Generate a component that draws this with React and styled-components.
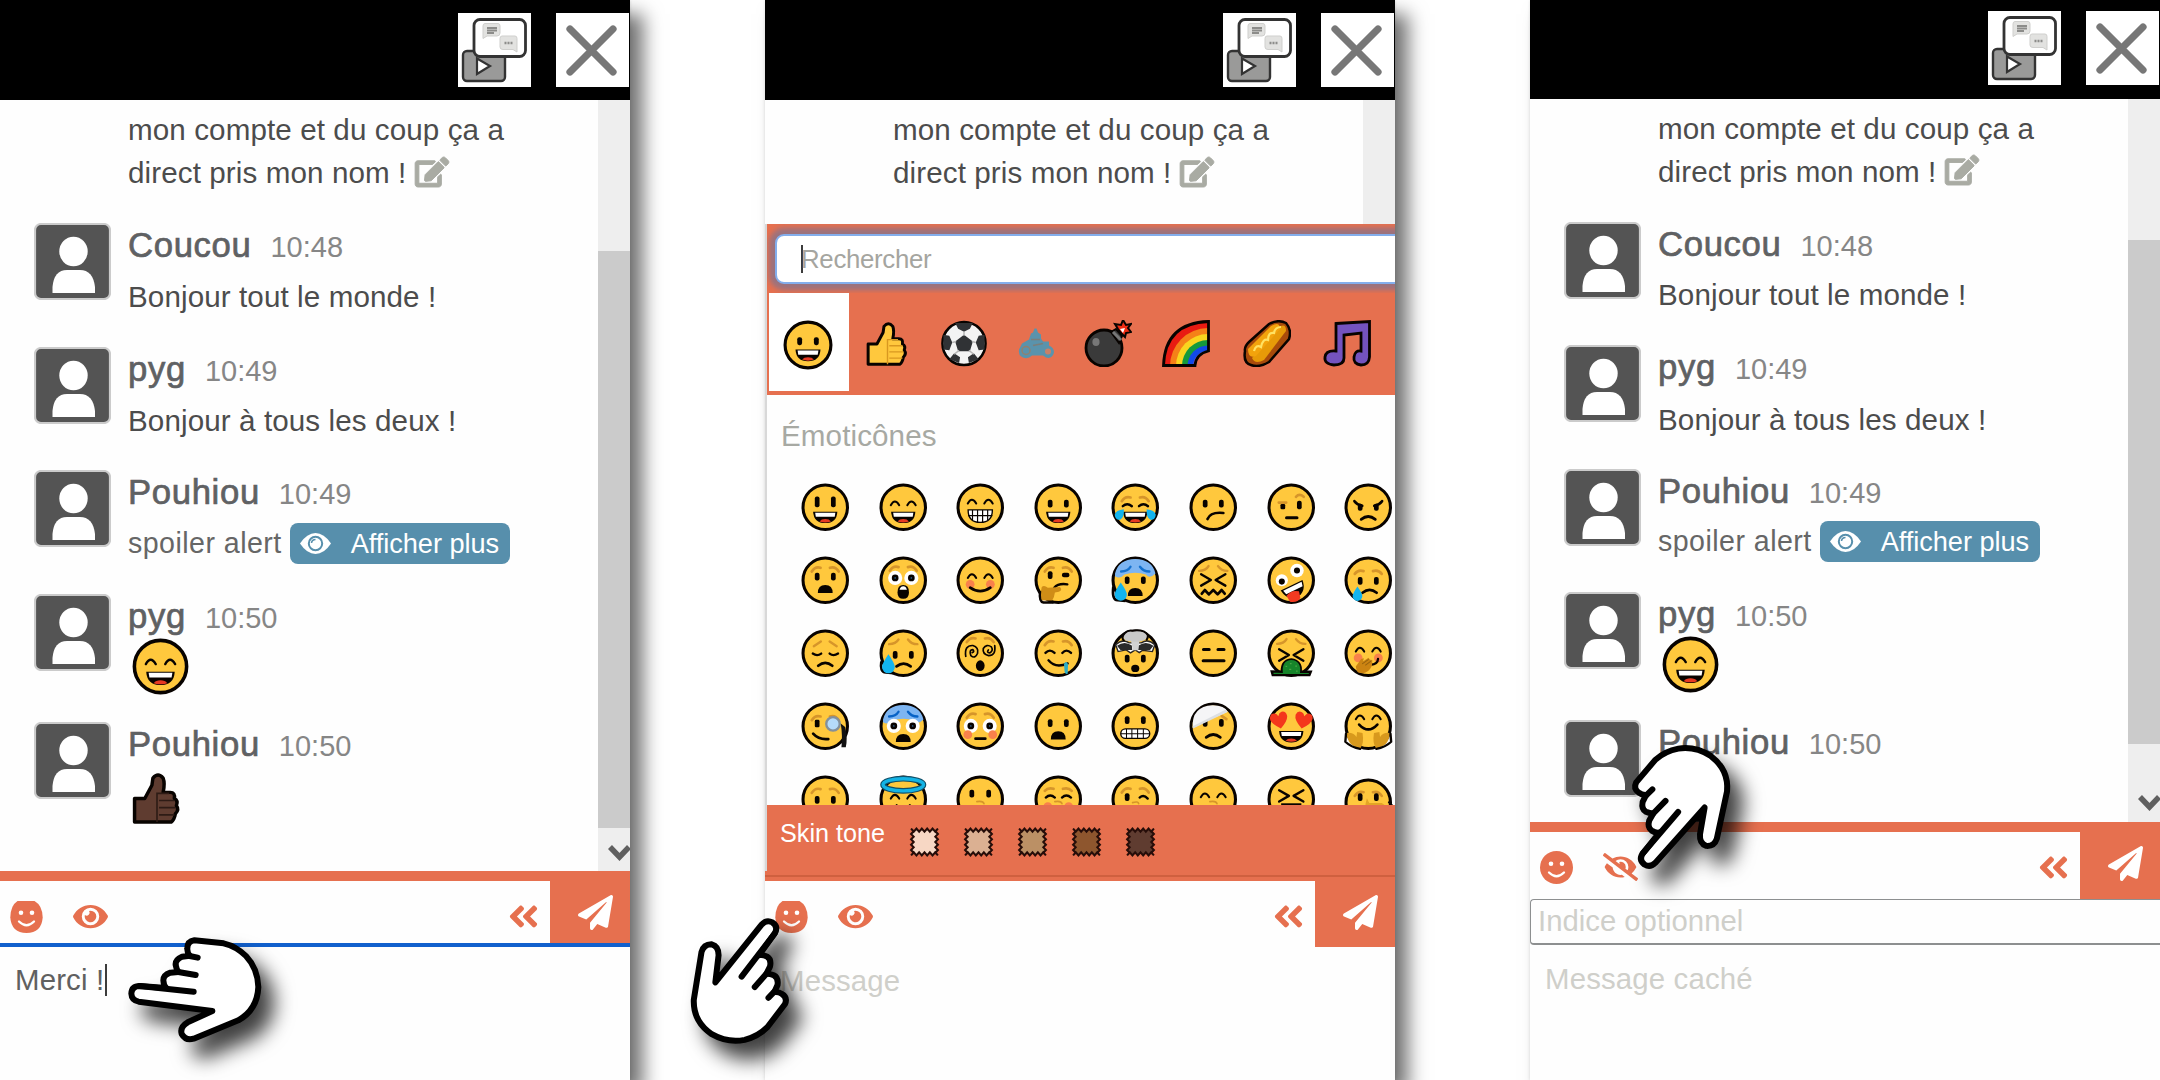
import React from "react";
import styled, { createGlobalStyle, css } from "styled-components";
import { FaEdit, FaEye, FaEyeSlash, FaAngleDoubleLeft, FaPaperPlane } from "react-icons/fa";

const ORANGE = "#e6704f";
const BLACK = "#080300";
const YELLOW = "#ffc83d";
const BROW = "#d6952a";

const GlobalStyle = createGlobalStyle`
  * { box-sizing: border-box; }
  body { margin: 0; background: #fff; font-family: "Liberation Sans", Arial, sans-serif; overflow: hidden; }
  svg { display: block; flex: none; }
`;

const Page = styled.main`
  position: relative;
  display: flex;
  gap: 135px;
  width: 2160px;
  height: 1080px;
  overflow: hidden;
  background: #fff;
`;

const Panel = styled.section`
  display: flex;
  flex-direction: column;
  flex: none;
  width: 630px;
  height: 1080px;
  background: #fefefe;
  box-shadow: 13px 14px 18px rgba(0, 0, 0, 0.56), 0 0 3px rgba(0, 0, 0, 0.12);
`;

const Header = styled.header`
  display: flex;
  justify-content: flex-end;
  gap: 25px;
  flex: none;
  height: ${(p) => p.$height}px;
  padding: ${(p) => (p.$height === 100 ? 13 : 11)}px 1px 0 0;
  background: #000;
`;

const HeaderButton = styled.div`
  width: 73px;
  height: 74px;
  background: #fff;
`;

const ChatArea = styled.div`
  display: flex;
  flex: none;
  height: ${(p) => p.$height}px;
  overflow: hidden;
`;

const MessageList = styled.div`
  flex: 1;
  padding-top: ${(p) => p.$top}px;
`;

const Text = styled.div`
  display: flex;
  align-items: center;
  font-size: 29.6px;
  letter-spacing: 0.1px;
  line-height: 43.2px;
  color: #4c4c4c;
  white-space: pre;
  ${(p) => p.$muted && css`font-size: 28.6px; letter-spacing: 0.45px; color: #666;`}
`;

const Continued = styled.div`
  height: 116px;
  padding-left: 128px;
`;

const EditIcon = styled(FaEdit)`
  width: 34px;
  height: 30px;
  margin: -2px 0 0 9px;
  color: #a9aba3;
  overflow: visible;
  stroke: currentColor;
  stroke-width: 16;
`;

const Message = styled.article`
  display: flex;
  gap: 17px;
  height: ${(p) => p.$height}px;
  padding-left: 34px;
`;

const NameLine = styled.div`
  display: flex;
  align-items: baseline;
  gap: 19px;
  height: 43px;
  line-height: 42px;
  margin-bottom: ${(p) => p.$gap}px;
`;

const Name = styled.span`
  font-size: 34.7px;
  letter-spacing: 0.65px;
  color: #5f6163;
  -webkit-text-stroke: 0.7px #5f6163;
`;

const Time = styled.span`
  font-size: 29px;
  color: #868686;
`;

const EmojiSlot = styled.div`
  padding-left: 4px;
`;

const MoreButton = styled.span`
  display: flex;
  align-items: center;
  gap: 20px;
  width: 220px;
  height: 41px;
  margin-left: 8px;
  padding-left: 10px;
  border-radius: 8px;
  background: #578fac;
  color: #fff;
  font-size: 27.2px;
  font-variant-ligatures: none;
  letter-spacing: -0.05px;
`;

const ScrollTrack = styled.div`
  display: flex;
  flex-direction: column;
  width: 32px;
  overflow: hidden;
  padding-top: ${(p) => p.$offset}px;
  background: #eee;
`;

const ScrollThumb = styled.div`
  flex: none;
  height: ${(p) => p.$height}px;
  background: #cbcbcb;
`;

const ScrollArrow = styled.svg`
  width: 26px;
  height: 22px;
  margin: ${(p) => p.$top}px 0 0 9px;
`;

const Composer = styled.div`
  display: flex;
  flex: none;
  height: ${(p) => p.$height}px;
  border-top: 10px solid ${ORANGE};
`;

const DividedComposer = styled(Composer)`
  border-top: 0;
  padding-top: 10px;
  background: linear-gradient(${ORANGE} 4px, #cf603f 4px, #cf603f 6px, ${ORANGE} 6px, ${ORANGE} 10px, #fefefe 10px);
`;

const Tools = styled.div`
  display: flex;
  flex: 1;
  align-items: center;
  height: 70px;
  padding: 0 11px 0 10px;
  color: ${ORANGE};
`;

const EyeIcon = styled(FaEye)`
  width: 35px;
  height: 31px;
  margin-left: 30px;
`;

const HiddenIcon = styled(FaEyeSlash)`
  width: 35px;
  height: 30px;
  margin-left: 30px;
`;

const CollapseIcon = styled(FaAngleDoubleLeft)`
  width: 31px;
  height: 35px;
  margin-left: auto;
`;

const Send = styled.div`
  display: flex;
  width: 80px;
  padding: 14px 0 0 28px;
  background: ${ORANGE};
  color: #fff;
  svg { width: 35px; height: 35px; }
`;

const Draft = styled.div`
  display: flex;
  align-items: center;
  gap: 1px;
  height: ${(p) => (p.$focused ? 69 : 67)}px;
  padding-left: 15px;
  border-top: ${(p) => (p.$focused ? "4px solid #1160cd" : "0")};
  font-size: 29.4px;
  letter-spacing: 0.15px;
  color: ${(p) => (p.$focused ? "#606060" : "#cfcfca")};
`;

const Caret = styled.i`
  width: 2px;
  height: ${(p) => p.$height}px;
  background: #3c3c3c;
`;

const HintField = styled.div`
  display: flex;
  align-items: center;
  flex: none;
  height: 46px;
  padding: 0 0 1px 7px;
  border: solid #8d8f90;
  border-width: 1px 0 2px 1px;
  border-radius: 4px 0 0 4px;
  font-size: 29.3px;
  color: #cfcfca;
`;

const Picker = styled.div`
  flex: none;
  display: flex;
  flex-direction: column;
  height: 647px;
  border-left: 2px solid #d8d8d8;
  overflow: hidden;
`;

const SearchBar = styled.div`
  height: 69px;
  padding: 10px 0 0 8px;
  overflow: hidden;
  background: ${ORANGE};
`;

const SearchField = styled.div`
  display: flex;
  align-items: center;
  width: 660px;
  height: 50px;
  padding-left: 24px;
  border: 2px solid #84aeec;
  border-radius: 9px;
  background: #fff;
  box-shadow: 0 0 5px 6px rgba(115, 115, 150, 0.66);
  font-size: 25.8px;
  letter-spacing: -0.3px;
  color: #a5a5a0;
`;

const SearchCaret = styled(Caret)`
  margin-right: -2px;
`;

const Tabs = styled.div`
  display: flex;
  height: 102px;
  padding: 0 0 4px 2px;
  background: ${ORANGE};
`;

const Tab = styled.div`
  display: flex;
  justify-content: center;
  align-items: center;
  flex: none;
  width: ${(p) => p.$width}px;
  padding-top: ${(p) => (p.$active ? 5 : 3)}px;
  padding-right: ${(p) => (p.$active ? 3 : 0)}px;
  background: ${(p) => (p.$active ? "#fff" : "transparent")};
`;

const EmojiBody = styled.div`
  height: 410px;
  padding: 18px 0 0 14px;
  overflow: hidden;
`;

const Category = styled.h2`
  margin: 0;
  height: 46px;
  line-height: 46px;
  font-size: 29.6px;
  letter-spacing: 0.1px;
  font-weight: 400;
  color: #a7a9a3;
`;

const EmojiGrid = styled.div`
  display: grid;
  grid-template-columns: repeat(8, 77.6px);
  grid-auto-rows: 72.9px;
  padding: 24px 0 0 20px;
`;

const SkinBar = styled.div`
  display: flex;
  align-items: center;
  flex: 1;
  padding: 7px 0 0 13px;
  gap: 21px;
  background: ${ORANGE};
`;

const SkinLabel = styled.span`
  width: 107px;
  margin: -17px 0 0;
  font-size: 25.2px;
  color: #fff;
  white-space: nowrap;
`;

const Pointer = styled.svg`
  position: absolute;
  left: ${(p) => p.$x - 90}px;
  top: ${(p) => p.$y - 90}px;
  width: 180px;
  height: 180px;
  overflow: visible;
  filter: drop-shadow(13px 16px 10px rgba(0, 0, 0, 0.75));
`;

/* ---------- emoji parts, drawn around a centre of 0,0 ---------- */

const Ink = ({ d, w = 7, c = BLACK }) => (
  <path d={d} fill="none" stroke={c} strokeWidth={w} strokeLinecap="round" strokeLinejoin="round" />
);
const Eyes = ({ y = -9, h = 23, dx = 24, w = 14 }) => (
  <g fill={BLACK}>
    <rect x={-dx - w / 2} y={y - h / 2} width={w} height={h} rx="6" />
    <rect x={dx - w / 2} y={y - h / 2} width={w} height={h} rx="6" />
  </g>
);
const HappyEyes = ({ y = -6 }) => <Ink w={6} d={`M-37,${y} q12,-22 25,0 M12,${y} q12,-22 25,0`} />;
const SquintEyes = ({ y = -2 }) => <Ink d={`M-37,${y} q13,-12 27,0 M11,${y} q13,-12 27,0`} />;
const Brows = ({ y = -34, c = BROW, tilt = 8 }) => (
  <Ink c={c} w={8} d={`M-40,${y + tilt} Q-30,${y - 8} -14,${y - 3} M14,${y - 3} Q30,${y - 8} 40,${y + tilt}`} />
);
const SwayBrows = ({ y = -36, c = BROW }) => (
  <Ink c={c} w={7} d={`M-42,${y + 10} Q-22,${y + 10} -14,${y - 4} M14,${y - 4} Q24,${y + 10} 42,${y + 10}`} />
);
const Laugh = ({ y = 13 }) => (
  <g transform={`translate(0 ${y})`}>
    <path d="M-36,0 H36 Q34,34 0,34 Q-34,34 -36,0Z" fill={BLACK} />
    <path d="M-30,3 H30 L28,15 H-28Z" fill="#fff" />
    <path d="M-17,29 Q-12,22 0,22 Q12,22 17,29 Q0,35 -17,29Z" fill="#e63a22" />
  </g>
);
const Frown = ({ y = 30, x = 0 }) => <Ink w={8} d={`M${x - 21},${y + 6} Q${x},${y - 11} ${x + 21},${y + 6}`} />;
const Smile = ({ y = 30 }) => <Ink w={8} d={`M-30,${y} Q0,${y + 21} 30,${y}`} />;
const Gape = ({ y = 14 }) => <path d={`M-22,${y + 24} Q-22,${y} 0,${y} Q22,${y} 22,${y + 24}Z`} fill={BLACK} />;
const Wide = ({ y = -4, dx = 28 }) => (
  <g>
    <circle cx={-dx} cy={y} r="21" fill="#fff" /><circle cx={dx} cy={y} r="21" fill="#fff" />
    <circle cx={-dx} cy={y} r="10" fill={BLACK} /><circle cx={dx} cy={y} r="10" fill={BLACK} />
    <circle cx={-dx} cy={y} r="2.5" fill="#26547c" /><circle cx={dx} cy={y} r="2.5" fill="#26547c" />
  </g>
);
const Blush = ({ y = 12, x = 30 }) => (
  <g fill="#f8814b"><circle cx={-x} cy={y} r="13" /><circle cx={x} cy={y} r="13" /></g>
);
const Tear = ({ x, y, s = 1 }) => (
  <path transform={`translate(${x} ${y}) scale(${s})`} d="M0,-26 Q18,0 18,10 A18,18 0 0 1 -18,10 Q-18,0 0,-26Z" fill="#12b4ef" />
);
const Cross = ({ y = -2 }) => <Ink w={7} d={`M-36,${y - 17} L-7,${y} L-36,${y + 17} M36,${y - 17} L7,${y} L36,${y + 17}`} />;
const BlueTop = () => <path d="M-60,-20 Q-50,-62 0,-63 Q50,-62 60,-20 Q42,-2 32,-17 Q0,-28 -32,-17 Q-46,-2 -60,-12Z" fill="#7db5f2" />;
const Heart = ({ x, r }) => (
  <path transform={`translate(${x} -18) rotate(${r})`} d="M0,25 Q-27,5 -26,-11 Q-22,-26 -9,-22 Q-2,-20 0,-12 Q4,-22 12,-23 Q25,-23 26,-9 Q26,6 0,25Z" fill="#f4371c" />
);

const FACES = {
  bigGrin: <><Eyes y={-16} h={32} /><Laugh /></>,
  laughing: <><HappyEyes /><Laugh /></>,
  beaming: <>
    <HappyEyes y={-11} />
    <path d="M-36,8 H36 Q36,45 0,45 Q-36,45 -36,8Z" fill="#fff" stroke={BLACK} strokeWidth="4" />
    <path d="M-36,25 H36 M-23,8 V39 M-8,8 V45 M7,8 V45 M22,8 V39" stroke={BLACK} strokeWidth="3.5" />
  </>,
  grin: <><Eyes y={-11} /><Laugh /></>,
  joy: <>
    <Brows y={-26} /><SquintEyes y={-3} /><Laugh />
    <path d="M-34,6 Q-32,31 -45,37 Q-59,39 -61,22 Q-58,9 -34,6Z M34,6 Q32,31 45,37 Q59,39 61,22 Q58,9 34,6Z" fill="#12b4ef" />
  </>,
  confused: <><Eyes y={-11} /><Ink w={8} d="M-17,35 Q-8,13 30,17" /></>,
  skeptic: <>
    <Ink c={BROW} w={8} d="M-37,-14 H-15 M14,-31 Q24,-42 37,-31" />
    <rect x="-32" y="-10" width="14" height="16" rx="4" fill={BLACK} /><rect x="17" y="-19" width="14" height="25" rx="6" fill={BLACK} />
    <Ink w={9} d="M-14,31 H17" />
  </>,
  angry: <><Ink w={8} d="M-41,-18 Q-34,-8 -18,-4 M41,-18 Q34,-8 18,-4" /><Eyes y={0} h={21} /><Frown y={30} /></>,
  anguished: <><Brows /><Eyes y={-11} /><Gape /></>,
  astonished: <>
    <Brows y={-36} /><Wide y={-7} dx={24} />
    <path d="M0,14 Q17,14 17,36 Q17,55 0,55 Q-17,55 -17,36 Q-17,14 0,14Z" fill={BLACK} />
    <path d="M-11,28 Q-8,18 0,18 Q8,18 11,28Z" fill="#fff" />
  </>,
  blushing: <><HappyEyes y={-7} /><Blush /><Smile y={22} /></>,
  thinking: <>
    <Brows y={-34} /><rect x="-31" y="-27" width="14" height="23" rx="6" fill={BLACK} />
    <rect x="11" y="-22" width="22" height="13" rx="6" fill={BLACK} /><Ink w={7} d="M-12,22 Q0,8 27,12" />
    <path d="M-49,20 Q-42,14 -31,22 L5,20 Q14,29 2,34 L-10,36 Q-12,52 -18,60 L-50,60 Q-56,52 -49,20Z" fill="#cf8d17" />
    <path d="M-54,32 Q-58,64 -44,66 L-14,66" stroke={BLACK} strokeWidth="7" fill="none" />
  </>,
  coldSweat: <><BlueTop /><SwayBrows y={-36} c="#1471cf" /><Eyes y={0} /><Gape y={23} />
    <path d="M-65,18 Q-70,60 -52,59 L-29,61" stroke={BLACK} strokeWidth="8" fill="none" /><Tear x={-43} y={33} /></>,
  confounded: <><SwayBrows y={-38} /><Cross y={-1} /><Ink w={8} d="M-34,40 L-25,29 L-13,42 L0,29 L13,42 L25,29 L34,40" /></>,
  zany: <>
    <circle cx="-28" cy="0" r="18" fill="#fff" /><circle cx="17" cy="-29" r="20" fill="#fff" />
    <circle cx="-28" cy="4" r="9" fill={BLACK} /><circle cx="17" cy="-29" r="9" fill={BLACK} />
    <g transform="rotate(-26 5 25)"><path d="M-30,14 H42 Q37,52 5,52 Q-25,52 -30,14Z" fill={BLACK} /><path d="M-24,18 H37 L34,31 H-20Z" fill="#fff" /></g>
    <path d="M-14,46 Q0,27 23,33 L27,52 Q20,68 -4,64Z" fill="#f33a21" />
  </>,
  crying: <><Brows y={-24} tilt={5} /><Eyes y={2} /><Frown y={31} x={4} /><Tear x={-32} y={39} s={0.8} /></>,
  pensive: <><Ink c={BROW} w={7} d="M-34,-21 L-13,-35 M13,-35 L34,-21" /><Ink w={7} d="M-37,1 Q-24,10 -12,1 M13,1 Q24,10 38,1" /><Frown y={31} /></>,
  relieved: <><SwayBrows y={-37} /><Eyes y={5} /><Frown y={33} x={1} /><path d="M-65,24 Q-70,56 -52,57 L-29,59" stroke={BLACK} strokeWidth="8" fill="none" /><Tear x={-44} y={30} s={1.05} /></>,
  dizzy: <><Brows y={-41} /><Ink w={5} d="M-43,9 Q-48,-24 -22,-23 Q-4,-18 -8,0 Q-15,18 -28,7 Q-34,-11 -22,-11 Q-16,-4 -24,-2 M43,-23 Q47,7 25,7 Q6,2 9,-14 Q19,-29 33,-19 Q40,-8 28,-1 Q18,-2 24,-10" />
    <ellipse cx="0" cy="37" rx="13" ry="16" fill={BLACK} /></>,
  drooling: <><Brows y={-32} /><Ink w={7} d="M-38,-1 Q-25,-15 -11,-1 M12,-1 Q24,-15 38,-1" /><Ink w={7} d="M-29,21 Q-8,46 28,30" /><path d="M17,31 Q24,20 29,33 L28,61 Q22,64 19,56Z" fill="#2cadc5" /></>,
  exploding: <>
    <path d="M-58,-25 Q-39,-44 -18,-31 L18,-31 Q39,-44 58,-25 L51,-5 L22,-9 L12,-2 L0,-10 L-14,-1 L-27,-10 L-51,-5Z" fill="#fff" stroke="#292522" strokeWidth="4" />
    <path d="M-54,-22 Q-32,-39 -10,-23 L-9,-10 L-44,-10Z M54,-22 Q32,-39 10,-23 L9,-10 L44,-10Z" fill="#2b2b2b" />
    <path d="M-13,-39 H13 L8,-9 H-7Z" fill="#d2d2d2" />
    <path d="M-27,-37 Q-43,-48 -31,-58 Q-24,-69 -9,-65 Q11,-70 25,-63 Q44,-54 33,-43 Q17,-29 -27,-37Z" fill="#c9c9c9" />
    <Ink w={6} d="M-34,-38 Q-43,-48 -31,-60 Q-22,-69 -9,-67 Q11,-70 25,-65 Q44,-56 34,-40" />
    <Eyes y={16} /><ellipse cx="0" cy="45" rx="12" ry="11" fill={BLACK} /></>,
  blank: <Ink w={9} d="M-29,-11 H-12 M14,-11 H32 M-30,22 H32" />,
  vomiting: <><SwayBrows y={-38} /><Cross y={5} /><path d="M-28,55 Q-29,21 0,18 Q31,22 28,55 H58 L54,65 H-55 L-58,54Z" fill="#16852a" stroke={BLACK} strokeWidth="7" /><path d="M-25,60 Q-29,21 0,20 Q31,22 26,60Z" fill="#16852a" /><path d="M-17,39 h5 M-4,31 h5 M12,38 h5 M-6,48 h6 M14,53 h5" stroke="#4ba446" strokeWidth="4" /></>,
  giggling: <><HappyEyes y={-5} /><Blush y={14} /><Ink w={7} d="M7,34 Q28,33 29,17" /><path d="M-37,39 L-21,17 L-13,15 L-15,24 L1,13 L5,19 L12,20 L11,37 Q0,61 -22,59 Q-35,59 -37,39Z" fill="#cc8412" /><Ink c="#96620e" w={3} d="M-17,31 L0,19 M-8,35 L7,24" /></>,
  monocle: <><Brows y={-26} /><rect x="-31" y="-19" width="14" height="22" rx="4" fill={BLACK} /><circle cx="23" cy="-7" r="20" fill="#b5dbfa" stroke="#84909a" strokeWidth="7" />
    <path d="M46,-8 Q52,30 48,62 H61 Q67,35 59,2" fill="#111" /><Ink w={8} d="M-36,22 Q-19,41 9,38" /></>,
  fearful: <><BlueTop /><SwayBrows y={-39} c="#0762c6" /><Wide y={-1} /><Gape y={23} /></>,
  flushed: <><Brows y={-33} /><Wide y={-1} /><Blush y={25} x={37} /><Ink w={8} d="M-14,37 H15" /></>,
  openFrown: <><Eyes y={-9} /><Gape y={15} /></>,
  grimace: <><Eyes y={-18} /><rect x="-43" y="8" width="86" height="28" rx="14" fill="#fff" stroke={BLACK} strokeWidth="4" /><path d="M-43,22 H43 M-26,8 V36 M-10,8 V36 M7,8 V36 M24,8 V36" stroke={BLACK} strokeWidth="3" /></>,
  bandaged: <><Ink c={BROW} w={8} d="M25,-31 L39,-21" /><Eyes y={-10} /><path d="M-61,5 Q-65,-59 -2,-62 Q34,-61 43,-43 L-16,-17Z" fill="#f5f5f7" /><path d="M-61,0 L36,-49 L42,-42 L-60,7Z" fill="#dcdfe3" /><Frown y={27} /></>,
  smitten: <><Laugh y={14} /><Heart x={-36} r={-12} /><Heart x={36} r={12} /></>,
  hugging: <><HappyEyes y={-21} /><Ink w={8} d="M-27,-5 Q0,24 27,-5" /><path d="M-65,20 Q-45,17 -35,32 L-33,17 L-17,20 Q-12,51 -23,65 Q-60,62 -65,20Z M65,20 Q45,17 35,32 L33,17 L17,20 Q12,51 23,65 Q60,62 65,20Z" fill="#d8991d" />
    <Ink w={7} d="M-66,22 L-68,46 Q-50,63 -24,67 M66,22 L68,46 Q50,63 24,67" /></>,
  pleading: <><Brows y={-27} /><Eyes y={2} /></>,
  angel: <><HappyEyes y={-2} /><Ink w={5} d="M-20,17 Q0,35 20,17" /><ellipse cx="0" cy="-43" rx="60" ry="18" fill="none" stroke="#124f67" strokeWidth="17" /><ellipse cx="0" cy="-43" rx="60" ry="18" fill="none" stroke="#13b3e5" strokeWidth="10" /></>,
  kissing: <><Eyes y={-17} dx={25} /><Ink c={BROW} w={5} d="M-10,7 Q9,4 11,13" /></>,
  kissBlush: <><Brows y={-28} tilt={3} /><SquintEyes y={-5} /><Blush y={22} x={31} /><Ink c={BROW} w={5} d="M-10,7 Q9,4 11,13" /></>,
  kissWink: <><Brows y={-28} /><rect x="-31" y="-18" width="14" height="23" rx="6" fill={BLACK} /><Ink w={7} d="M13,-5 Q25,-15 37,-2" /><Ink c={BROW} w={5} d="M-8,10 Q9,5 10,13" /></>,
  kissHappy: <><HappyEyes y={-6} /><Ink c={BROW} w={5} d="M-10,7 Q9,4 11,13" /></>,
  squinting: <><Cross y={-10} /><path d="M-30,12 H30 V40 H-30Z" fill={BLACK} /></>,
  shushing: <g transform="translate(0 9)"><Brows y={-27} /><Eyes y={-15} /><path d="M-4,-12 L3,2 H40 L60,16 V45 H-10 L-8,4Z" fill="#d9991d" opacity="0.75" /><Ink w={7} d="M62,0 L74,14" /></g>,
};

const ROWS = [
  ["bigGrin", "laughing", "beaming", "grin", "joy", "confused", "skeptic", "angry"],
  ["anguished", "astonished", "blushing", "thinking", "coldSweat", "confounded", "zany", "crying"],
  ["pensive", "relieved", "dizzy", "drooling", "exploding", "blank", "vomiting", "giggling"],
  ["monocle", "fearful", "flushed", "openFrown", "grimace", "bandaged", "smitten", "hugging"],
  ["pleading", "angel", "kissing", "kissBlush", "kissWink", "kissHappy", "squinting", "shushing"],
];

const Face = ({ name, size = 48.5 }) => (
  <svg width={size} height={size} viewBox="-72 -72 144 144">
    <circle cy={name === "shushing" ? 9 : 0} r="66" fill={YELLOW} stroke={BLACK} strokeWidth="9" />
    {FACES[name]}
  </svg>
);

const Thumb = ({ width, height, fill, line }) => (
  <svg width={width} height={height} viewBox="0 0 48 50">
    <path d="M2,25 H12 L19,12 L20,5 Q25,-1 30,5 Q32,10 30,19 H37 Q42,19 41,25 Q45,27 43,32 Q46,36 42,40 Q41,46 38,48 H2Z" fill={fill} stroke={BLACK} strokeWidth="3.4" strokeLinejoin="round" />
    <path d="M24,48 V20 H36 M26,27 H41 M26,34 H42 M26,41 H41" fill="none" stroke={line} strokeWidth="1.6" />
  </svg>
);

const Ball = () => (
  <svg width="48" height="47" viewBox="-24 -24 48 48">
    <circle r="22" fill="#f3f3f3" stroke={BLACK} strokeWidth="2.6" />
    <path d="M0,-9 L9,-2 L6,8 H-6 L-9,-2Z M-9,-21 H9 L6,-15 L0,-12 L-6,-15Z M-21,-9 L-15,-8 L-12,-1 L-15,7 L-21,6Z M21,-9 L15,-8 L12,-1 L15,7 L21,6Z M-15,16 L-10,10 L-4,14 L-5,20Z M15,16 L10,10 L4,14 L5,20Z" fill="#303235" />
    <path d="M0,-8 V-12 M8,-2 L12,-1 M5,7 L10,11 M-5,7 L-10,11 M-8,-2 L-12,-1" stroke="#b5b5b5" strokeWidth="1.5" />
  </svg>
);

const Motorbike = () => (
  <svg width="36" height="32" viewBox="0 0 36 31">
    <path d="M13,5 L15,4 L16.500,0 H18.500 L20,4 L23,6 L23,10 L25,13 H31 L31,17 Q36,19 36,24 Q34,31 28,29 L25,27 H14 Q10,31 5,29 Q0,27 1,21 L4,15 L11,11Z" fill="#5a93ac" />
    <circle cx="8" cy="22" r="4" fill="none" stroke="#91806f" strokeWidth="1.5" /><circle cx="30" cy="23" r="3" fill="#c98068" /><path d="M13,11 H22 M15,17 L25,15" stroke="#7c7e7a" strokeWidth="1.5" />
  </svg>
);

const Bomb = () => (
  <svg width="48" height="47" viewBox="0 0 48 47">
    <circle cx="20" cy="28" r="18" fill="#3a3a3a" stroke={BLACK} strokeWidth="2.8" />
    <path d="M27,12 L32,9 L38,16 L35,23Z" fill="#3a3a3a" stroke={BLACK} strokeWidth="2" />
    <path d="M29,12 L37,20" stroke="#777" strokeWidth="3" />
    <ellipse cx="12" cy="22" rx="3.6" ry="4" fill="#777" />
    <path d="M34,9 L31,4 L37,5 L39,0 L42,5 L47,4 L44,8 L47,12 L42,13 L41,17 L37,13Z" fill="#f02d13" stroke={BLACK} strokeWidth="2" /><path d="M36,9 L41,8 L39,13Z" fill="#fff" />
  </svg>
);

const BANDS = [["#e91b12", 43], ["#f58118", 36], ["#f9d51f", 30], ["#149a3c", 24], ["#1249e8", 18.5], ["#7654c0", 13]];
const Rainbow = () => (
  <svg width="48" height="47" viewBox="0 0 48 47">
    <clipPath id="arc"><path d="M1.5,45.5 Q3,3 46.5,1.5 V31 Q34,34 33,45.5Z" /></clipPath>
    <g clipPath="url(#arc)">{BANDS.map(([c, r]) => <ellipse key={c} cx="46" cy="46" rx={r + 2} ry={r + 2} fill={c} />)}</g>
    <path d="M1.5,45.5 Q3,3 46.5,1.5 V31 Q34,34 33,45.5Z" fill="none" stroke={BLACK} strokeWidth="2.8" />
  </svg>
);

const HotDog = () => (
  <svg width="48" height="47" viewBox="0 0 48 47">
    <path d="M2,31 Q1,27 6,22 L26,4 Q35,-1 43,3 Q49,10 46,19 L26,42 Q16,48 8,45 Q0,43 2,31Z" fill="#a94b0b" stroke={BLACK} strokeWidth="2.5" />
    <path d="M9,38 L35,8 Q43,2 43,11 L21,40 Q12,45 9,38Z" fill="#e79a08" /><path d="M5,29 L28,6 Q37,1 37,9 L13,36 Q5,39 5,29Z" fill="#f3a30c" />
    <path d="M11,31 Q13,24 18,27 Q20,18 25,20 Q25,12 31,13 Q32,7 38,7" fill="none" stroke="#ffe263" strokeWidth="2.2" />
  </svg>
);

const Notes = () => (
  <svg width="48" height="47" viewBox="0 0 48 47">
    <path d="M13,3.5 L46.5,1.5 V37 Q46,45 38,45 Q30,44 31,37 Q32,30 38,31 V13 L21,15 V38 Q21,45 11,45 Q1,44 2,37 Q3,30 13,31Z" fill="#7453bf" stroke={BLACK} strokeWidth="2.8" />
  </svg>
);

const zigzag = (() => {
  const pts = [];
  const n = 5, s = 26 / n;
  for (let i = 0; i < n; i++) pts.push(`${3 + i * s},3 ${3 + (i + 0.5) * s},6`);
  for (let i = 0; i < n; i++) pts.push(`${29},${3 + i * s} ${26.5},${3 + (i + 0.5) * s}`);
  for (let i = 0; i < n; i++) pts.push(`${29 - i * s},29 ${29 - (i + 0.5) * s},26`);
  for (let i = 0; i < n; i++) pts.push(`${3},${29 - i * s} ${5.5},${29 - (i + 0.5) * s}`);
  return pts.join(" ");
})();

const Swatch = ({ color }) => (
  <svg width="33" height="34" viewBox="0 0 32 32"><polygon points={zigzag} fill={color} stroke="#260d09" strokeWidth="2" /></svg>
);

/* ---------- interface icons ---------- */

const AvatarFrame = styled.svg`
  margin-top: -1px;
`;

const Avatar = () => (
  <AvatarFrame width="77" height="77" viewBox="-1 -1 77 77">
    <rect x="0" y="0" width="75" height="75" rx="6" fill="#545454" stroke="#cbcbcb" strokeWidth="2.2" />
    <ellipse cx="38.5" cy="27.5" rx="14.2" ry="14.8" fill="#fff" />
    <path d="M17.5,69 V63 Q19,46 32,46 H45 Q58,46 60,63 V69Z" fill="#fff" />
  </AvatarFrame>
);

const ChatVideoIcon = () => (
  <svg width="73" height="74" viewBox="0 0 73 74">
    <rect x="5" y="38" width="42" height="30" rx="4" fill="#9a9a99" stroke="#333" strokeWidth="2.4" />
    <path d="M19,45.500 L32,53 L19,61Z" fill="#fff" stroke="#333" strokeWidth="2.2" />
    <rect x="16" y="6.500" width="51.500" height="37" rx="6" fill="#fff" stroke="#333" strokeWidth="2.8" />
    <path d="M27,10.500 H40 Q42,10.500 42,13 V20 Q42,23 39,23 H29 L25,25.500 V13 Q25,10.500 27,10.500Z" fill="#e2e2e0" stroke="#cfcfcd" />
    <path d="M44,23 H57 Q59,23 59,25.500 V39 L55,36.500 H45 Q42,36.500 42,34 V25.500 Q42,23 44,23Z" fill="#e2e2e0" stroke="#cfcfcd" />
    <path d="M29,15 H39 M29,17.500 H39 M29,20 H36" stroke="#8c8c8a" strokeWidth="1.8" />
    <path d="M46.500,30 H55" stroke="#8c8c8a" strokeWidth="2.500" strokeDasharray="2 1" />
  </svg>
);

const CloseIcon = () => (
  <svg width="73" height="74" viewBox="0 0 73 74">
    <path d="M14,16 L57,59 M57,16 L14,59" stroke="#777" strokeWidth="7.2" strokeLinecap="round" />
  </svg>
);

const Smiley = ({ flat }) => (
  <svg width="33" height="33" viewBox="-16.5 -16.5 33 33">
    <path d={flat ? "M-9,-15.500 H8 Q16,-11 16.200,1 Q15,16.500 0,16.500 Q-15,16.500 -16.200,1 Q-16,-11 -9,-15.500Z" : "M0,-16.500 A16.500,16.500 0 1 1 0,16.500 A16.500,16.500 0 1 1 0,-16.500Z"} fill={ORANGE} />
    <circle cx="-5.5" cy="-3.8" r="2.3" fill="#fff" /><circle cx="5.500" cy="-3.8" r="2.3" fill="#fff" />
    <path d="M-7.500,5 Q0,12.500 7.500,5" fill="none" stroke="#fff" strokeWidth="2.3" strokeLinecap="round" />
  </svg>
);

const RoundEye = () => (
  <svg width="31" height="21" viewBox="0 0 31 21">
    <path d="M0,10.500 Q7,0 15.500,0 Q24,0 31,10.500 Q24,21 15.500,21 Q7,21 0,10.500Z" fill="#fff" />
    <circle cx="15.500" cy="10.500" r="6.700" fill="none" stroke="#578fac" strokeWidth="2" />
    <path d="M11.500,10 Q12,6.500 15.500,6.500" fill="none" stroke="#578fac" strokeWidth="1.600" />
  </svg>
);

const Hand = ({ x, y, turn }) => (
  <Pointer $x={x} $y={y} viewBox="-270 -270 540 540">
    <g transform={`rotate(${turn}) translate(-308 -332)`} stroke="#000" strokeWidth="18" strokeLinecap="round" strokeLinejoin="round">
      <path fill="#fff" d="M88,257 Q64,257 63,280 Q64,300 85,304 L306,332 L232,366 Q208,380 214,401 Q226,422 250,415 L384,360 Q441,328 444,260 Q442,204 407,167 Q378,138 340,129 L252,120 Q231,123 231,144 Q230,156 238,166 L215,169 Q194,178 196,194 Q198,206 204,215 L180,217 Q159,224 159,240 Q160,256 168,263 Z" />
      <path fill="none" d="M88,257 L250,274 M204,215 L256,224 M238,167 L262,172" />
    </g>
  </Pointer>
);

/* ---------- panels ---------- */

const TopBar = ({ height = 100 }) => (
  <Header $height={height}>
    <HeaderButton><ChatVideoIcon /></HeaderButton>
    <HeaderButton><CloseIcon /></HeaderButton>
  </Header>
);

const Entry = ({ name, time, height = 123.5, gap = 7.5, children }) => (
  <Message $height={height}>
    <Avatar />
    <div>
      <NameLine $gap={gap}><Name>{name}</Name><Time>{time}</Time></NameLine>
      {children}
    </div>
  </Message>
);

const Opening = () => (
  <Continued>
    <Text>mon compte et du coup ça a</Text>
    <Text>direct pris mon nom !<EditIcon /></Text>
  </Continued>
);

const Conversation = ({ top }) => (
  <MessageList $top={top}>
    <Opening />
    <Entry name="Coucou" time="10:48"><Text>Bonjour tout le monde !</Text></Entry>
    <Entry name="pyg" time="10:49" gap={8.5}><Text>Bonjour à tous les deux !</Text></Entry>
    <Entry name="Pouhiou" time="10:49">
      <Text $muted>spoiler alert<MoreButton><RoundEye />Afficher plus</MoreButton></Text>
    </Entry>
    <Entry name="pyg" time="10:50" height={128} gap={0}><EmojiSlot><Face name="laughing" size={57} /></EmojiSlot></Entry>
    <Entry name="Pouhiou" time="10:50" gap={7}><EmojiSlot><Thumb width={50} height={51} fill="#5f3c30" line="#2e1b15" /></EmojiSlot></Entry>
  </MessageList>
);

const Scrollbar = ({ offset, thumb, arrow }) => (
  <ScrollTrack $offset={offset}>
    {thumb && <ScrollThumb $height={thumb} />}
    {arrow && <ScrollArrow $top={arrow} viewBox="0 0 26 22"><path d="M3,5 L12.500,15 L22,5" fill="none" stroke="#606060" strokeWidth="5.500" /></ScrollArrow>}
  </ScrollTrack>
);

const ToolRow = ({ hidden, flat }) => (
  <>
    <Tools>
      <Smiley flat={flat} />
      {hidden ? <HiddenIcon /> : <EyeIcon />}
      <CollapseIcon />
    </Tools>
    <Send><FaPaperPlane /></Send>
  </>
);

const TABS = [
  [80, <Face name="grin" size={50} />],
  [77, <Thumb width={45} height={44} fill={YELLOW} line="#d99820" />],
  [76, <Ball />], [68, <Motorbike />], [75, <Bomb />], [81, <Rainbow />], [81, <HotDog />], [80, <Notes />],
];

const EmojiPicker = () => (
  <Picker>
    <SearchBar><SearchField><SearchCaret $height={28} />Rechercher</SearchField></SearchBar>
    <Tabs>{TABS.map(([width, icon], i) => <Tab key={i} $width={width} $active={i === 0}>{icon}</Tab>)}</Tabs>
    <EmojiBody>
      <Category>Émoticônes</Category>
      <EmojiGrid>{ROWS.flat().map((name) => <Face key={name} name={name} />)}</EmojiGrid>
    </EmojiBody>
    <SkinBar>
      <SkinLabel>Skin tone</SkinLabel>
      {["#f7d7c4", "#dbb092", "#bb9065", "#8e562e", "#5f3c30"].map((c) => <Swatch key={c} color={c} />)}
    </SkinBar>
  </Picker>
);

export default function App() {
  return (
    <Page>
      <GlobalStyle />
      <Panel>
        <TopBar />
        <ChatArea $height={771}>
          <Conversation top={8} />
          <Scrollbar offset={151} thumb={577} arrow={14} />
        </ChatArea>
        <Composer $height={72}><ToolRow flat /></Composer>
        <Draft $focused>Merci !<Caret $height={32} /></Draft>
      </Panel>
      <Panel>
        <TopBar />
        <ChatArea $height={124}>
          <MessageList $top={8}><Opening /></MessageList>
          <Scrollbar offset={124} />
        </ChatArea>
        <EmojiPicker />
        <DividedComposer $height={76}><ToolRow flat /></DividedComposer>
        <Draft>Message</Draft>
      </Panel>
      <Panel>
        <TopBar height={99} />
        <ChatArea $height={723}>
          <Conversation top={7.5} />
          <Scrollbar offset={141} thumb={504} arrow={48} />
        </ChatArea>
        <Composer $height={77}><ToolRow hidden /></Composer>
        <HintField>Indice optionnel</HintField>
        <Draft>Message caché</Draft>
      </Panel>
      <Hand x={212.5} y={1010.5} turn={0} />
      <Hand x={715} y={983} turn={121.5} />
      <Hand x={1705} y={807} turn={-55.5} />
    </Page>
  );
}
